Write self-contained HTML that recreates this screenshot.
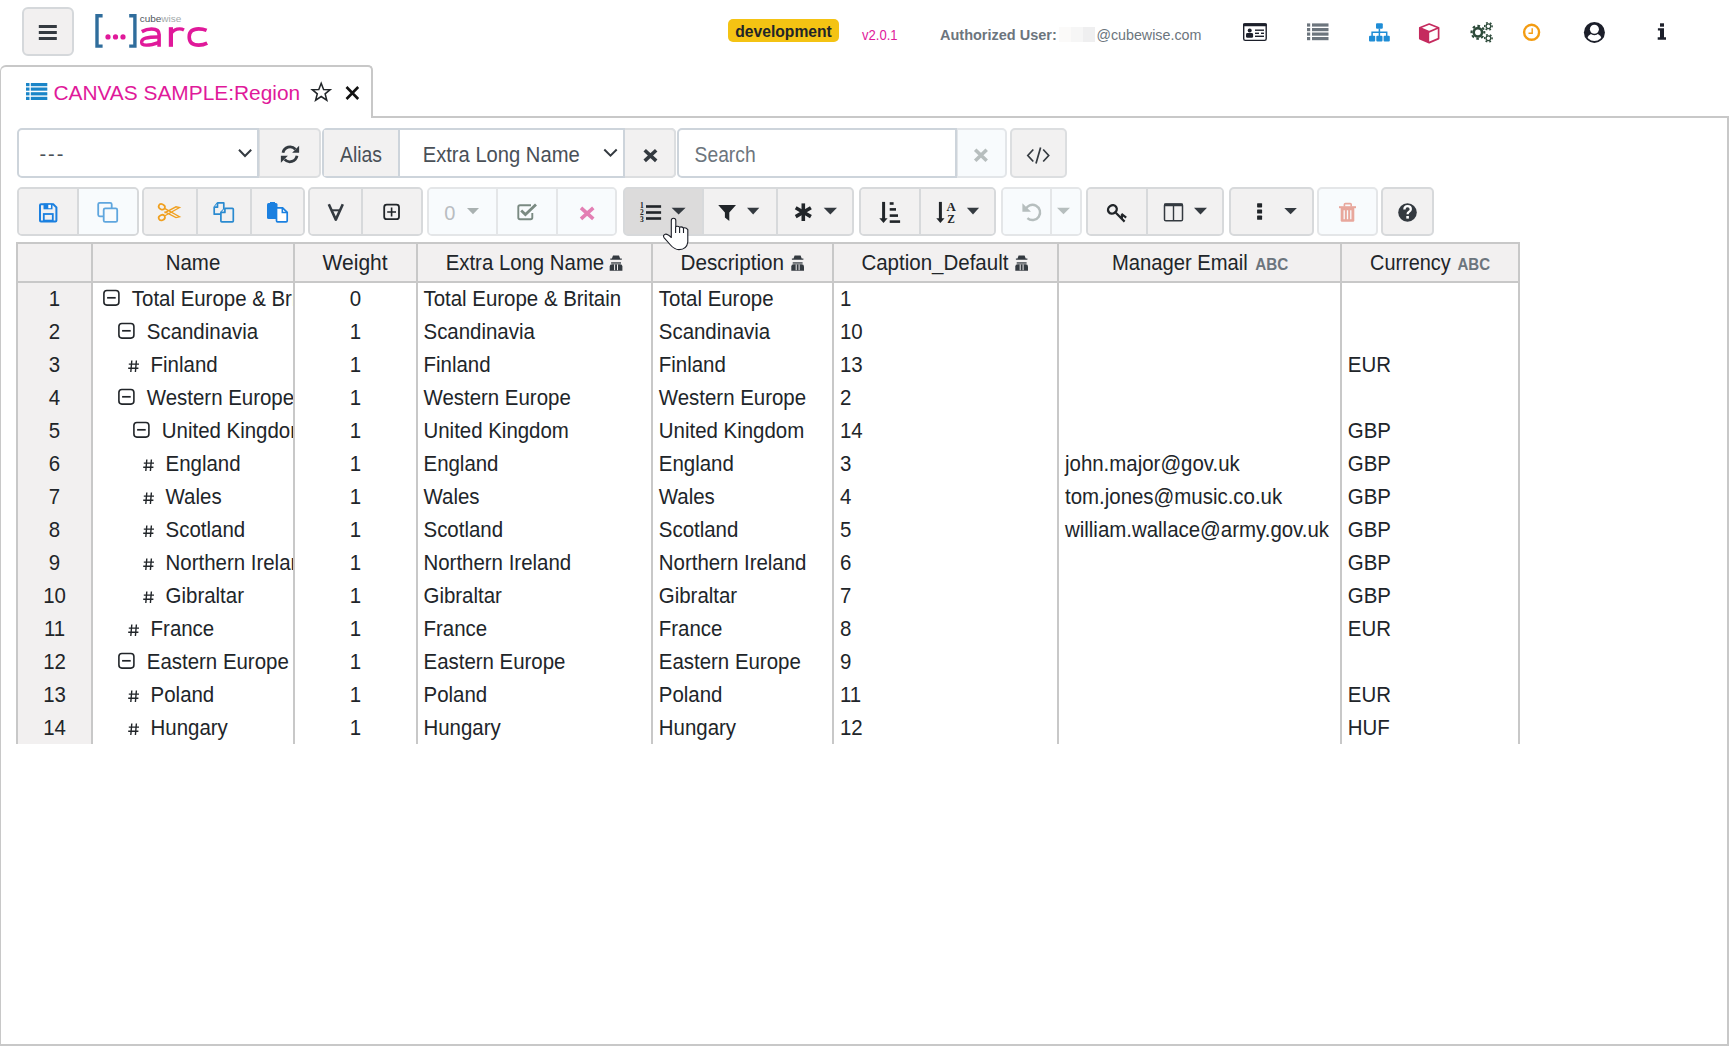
<!DOCTYPE html><html><head><meta charset="utf-8"><style>
*{box-sizing:border-box;margin:0;padding:0}
html,body{width:1734px;height:1056px;overflow:hidden;background:#fff;font-family:"Liberation Sans",sans-serif;color:#212529;position:relative}
.a{position:absolute}
.btn{position:absolute;background:#f2f0f0;border:2px solid #d9dcdf;}
.t{position:absolute;white-space:nowrap;line-height:1}
svg{position:absolute;overflow:visible}
.cell{position:absolute;white-space:nowrap;overflow:hidden;font-size:20.5px;line-height:33px;height:33px}
.vl{position:absolute;background:#c8c8c8;width:2px}
</style></head><body>
<div class="btn" style="left:22px;top:7px;width:52px;height:49px;border-radius:6px;border-color:#d5d8db"></div>
<svg style="left:0;top:0" width="1734" height="65"><rect x="38.8" y="25" width="18" height="3" fill="#343a40"/><rect x="38.8" y="31" width="18" height="3" fill="#343a40"/><rect x="38.8" y="37" width="18" height="3" fill="#343a40"/><path d="M102.6 15.7H97V46.1H102.6" fill="none" stroke="#2f6d9c" stroke-width="3.4"/><path d="M129.2 15.7H134.9V46.1H129.2" fill="none" stroke="#2f6d9c" stroke-width="3.4"/><circle cx="108" cy="36.9" r="2.6" fill="#e0199a"/><circle cx="115.5" cy="36.9" r="2.6" fill="#e0199a"/><circle cx="123" cy="36.9" r="2.6" fill="#e0199a"/><text x="139.7" y="22.3" font-family="Liberation Sans" font-size="9.8" font-weight="normal" textLength="41.6" lengthAdjust="spacingAndGlyphs"><tspan fill="#4f565c">cube</tspan><tspan fill="#a3a9aa">wise</tspan></text><g fill="none" stroke="#e0199a" stroke-width="3.6"><path d="M141.8 31.6Q146.5 29 151.6 29Q159.1 29.1 159.1 34.4V46.8"/><path d="M159.1 37Q150 36.9 145.6 38.2Q141.5 39.4 141.6 42.4Q141.8 45.2 146.2 45.2Q151.8 45.2 159.1 42.4" stroke-width="3.3"/><path d="M170.9 27.2V46.8" stroke-width="4.2"/><path d="M171.2 33.4Q174.2 28.9 179.6 28.9Q182 28.9 184 30" stroke-width="3.2"/><path d="M206.6 30.4Q203 28.9 198.6 28.9Q189.2 29 189.2 37Q189.2 45.1 198.8 45.1Q203.2 45.1 207.2 43.1"/></g></svg>
<div class="a" style="left:728px;top:19px;width:111px;height:23px;background:#f4c313;border-radius:5px"></div>
<svg style="left:0;top:0" width="1734" height="65"><text x="735.3" y="36.8" font-family="Liberation Sans" font-size="15.6" font-weight="bold" fill="#212529" textLength="96.5" lengthAdjust="spacingAndGlyphs">development</text><text x="862" y="39.8" font-family="Liberation Sans" font-size="15" fill="#e0199a" textLength="35.6" lengthAdjust="spacingAndGlyphs">v2.0.1</text><text x="940" y="40" font-family="Liberation Sans" font-size="15" font-weight="bold" fill="#6c757d" textLength="116.8" lengthAdjust="spacingAndGlyphs">Authorized User:</text><rect x="1059" y="27" width="12" height="15" fill="#fbfaf9"/><rect x="1071" y="27" width="12" height="15" fill="#f6f6f6"/><rect x="1083" y="27" width="12" height="15" fill="#efeff0"/><text x="1096.4" y="40" font-family="Liberation Sans" font-size="15" fill="#6c757d" textLength="105" lengthAdjust="spacingAndGlyphs">@cubewise.com</text></svg>
<svg style="left:0;top:0" width="1734" height="65"><rect x="1243.7" y="24" width="22.5" height="16.4" rx="1.6" fill="none" stroke="#1c1f2a" stroke-width="1.4"/><rect x="1243" y="23.3" width="23.9" height="2.9" rx="1.2" fill="#1c1f2a"/><circle cx="1249.7" cy="30.5" r="2" fill="#1c1f2a"/><rect x="1246" y="33.1" width="7.1" height="4.7" rx="1.4" fill="#1c1f2a"/><rect x="1255" y="29.5" width="9" height="1.4" fill="#1c1f2a"/><rect x="1255" y="32.6" width="4" height="1.4" fill="#1c1f2a"/><rect x="1261" y="32.6" width="3" height="1.4" fill="#1c1f2a"/><rect x="1255" y="35.6" width="9" height="1.4" fill="#1c1f2a"/><g fill="#6c757d"><rect x="1307" y="23.4" width="3.2" height="3.2"/><rect x="1312" y="23.4" width="16.5" height="3.2"/><rect x="1307" y="28" width="3.2" height="3.2"/><rect x="1312" y="28" width="16.5" height="3.2"/><rect x="1307" y="32.5" width="3.2" height="3.2"/><rect x="1312" y="32.5" width="16.5" height="3.2"/><rect x="1307" y="37" width="3.2" height="3.2"/><rect x="1312" y="37" width="16.5" height="3.2"/></g><g fill="#1f8dd6"><rect x="1376" y="23.3" width="6.8" height="5.4" rx="1"/><rect x="1369" y="35.8" width="6.2" height="5.7" rx="1"/><rect x="1376.3" y="35.8" width="6.2" height="5.7" rx="1"/><rect x="1383.6" y="35.8" width="6.2" height="5.7" rx="1"/></g><path d="M1379.4 28.5V36M1372.1 36V32.2H1386.7V36" fill="none" stroke="#1f8dd6" stroke-width="1.5"/><path d="M1429.2 24L1438.6 27.8V38.6L1429.2 42.6L1419.8 38.6V27.8Z" fill="#fff" stroke="#c52a5e" stroke-width="1.7" stroke-linejoin="round"/><path d="M1419.8 27.8L1429.2 31.8V42.6L1419.8 38.6Z" fill="#c52a5e"/><path d="M1419.8 27.8L1429.2 31.8L1438.6 27.8" fill="none" stroke="#c52a5e" stroke-width="1.7"/><g fill="none" stroke="#2d4a3a"><circle cx="1477.9" cy="32.3" r="4.2" stroke-width="2.6"/><circle cx="1477.9" cy="32.3" r="6.4" stroke-width="2.1" stroke-dasharray="2.55 2.48" transform="rotate(-11 1477.9 32.3)"/><circle cx="1488.4" cy="26.3" r="2.35" stroke-width="1.3"/><circle cx="1488.4" cy="26.3" r="3.7" stroke-width="1.5" stroke-dasharray="1.9 1.97" transform="rotate(-15 1488.4 26.3)"/><circle cx="1488.4" cy="38.3" r="2.35" stroke-width="1.3"/><circle cx="1488.4" cy="38.3" r="3.7" stroke-width="1.5" stroke-dasharray="1.9 1.97" transform="rotate(-15 1488.4 38.3)"/></g><circle cx="1531.6" cy="32.3" r="7.5" fill="none" stroke="#f39c12" stroke-width="2.4"/><path d="M1532.2 28.3V33.2H1528.5" fill="none" stroke="#f39c12" stroke-width="1.4"/><clipPath id="ucc"><circle cx="1594.4" cy="32.4" r="8.6"/></clipPath><circle cx="1594.4" cy="32.4" r="10.5" fill="#1c1f2a"/><ellipse cx="1594.4" cy="42" rx="8.2" ry="9" fill="#fff" clip-path="url(#ucc)"/><circle cx="1594.4" cy="29.3" r="5.9" fill="#1c1f2a"/><circle cx="1594.4" cy="29.3" r="4.5" fill="#fff"/><rect x="1660" y="23.3" width="4" height="3.4" fill="#1c1f2a"/><path d="M1657.9 28.2H1664V37.2H1666V39.8H1657.7V37.2H1660V30.6H1657.9Z" fill="#1c1f2a"/></svg>
<div class="a" style="left:0;top:116px;width:1729px;height:930px;border:2px solid #c8c8c8;border-left-width:1px"></div>
<div class="a" style="left:0;top:65px;width:373px;height:53px;border:2px solid #c8c8c8;border-left-width:1px;border-bottom:none;border-radius:6px 5px 0 0;background:#fff"></div>
<svg style="left:0;top:60px" width="400" height="60"><g fill="#1a85c8"><rect x="26" y="23" width="3.5" height="3.2"/><rect x="30.8" y="23" width="16.5" height="3.2"/><rect x="26" y="27.5" width="3.5" height="3.2"/><rect x="30.8" y="27.5" width="16.5" height="3.2"/><rect x="26" y="32.2" width="3.5" height="3.2"/><rect x="30.8" y="32.2" width="16.5" height="3.2"/><rect x="26" y="36.8" width="3.5" height="3.2"/><rect x="30.8" y="36.8" width="16.5" height="3.2"/></g><text x="53.4" y="39.8" font-family="Liberation Sans" font-size="20.6" fill="#e0199a" textLength="246.8" lengthAdjust="spacingAndGlyphs">CANVAS SAMPLE:Region</text><path d="M321.2 23.3L323.6 29.4L330.2 29.7L325.1 33.8L326.8 40.2L321.2 36.5L315.6 40.2L317.3 33.8L312.2 29.7L318.8 29.4Z" fill="none" stroke="#212529" stroke-width="1.5" stroke-linejoin="miter"/><path d="M346.5 27L358.2 39M358.2 27L346.5 39" stroke="#111" stroke-width="2.6"/></svg>
<div class="a" style="left:17px;top:128px;width:242px;height:50px;border:2px solid #cdd4db;border-radius:5px 0 0 5px;background:#fff"></div>
<div class="a" style="left:258px;top:128px;width:63px;height:50px;border:2px solid #dcdee0;border-radius:0 5px 5px 0;background:#f2f1f1"></div>
<div class="a" style="left:257px;top:128px;width:2px;height:50px;background:#cdd4db"></div>
<div class="a" style="left:322px;top:128px;width:354px;height:50px;border:2px solid #cdd4db;border-radius:5px;background:#fff"></div>
<div class="a" style="left:324px;top:130px;width:75px;height:46px;background:#f2f1f1"></div>
<div class="a" style="left:398px;top:130px;width:2px;height:46px;background:#cdd4db"></div>
<div class="a" style="left:623px;top:128px;width:53px;height:50px;border:2px solid #dcdee0;border-radius:0 5px 5px 0;background:#f2f1f1"></div>
<div class="a" style="left:623px;top:128px;width:2px;height:50px;background:#cdd4db"></div>
<div class="a" style="left:677px;top:128px;width:281px;height:50px;border:2px solid #cdd4db;border-radius:5px 0 0 5px;background:#fff"></div>
<div class="a" style="left:956px;top:128px;width:51px;height:50px;border:2px solid #e3e6e9;border-radius:0 5px 5px 0;background:#f8fbfd"></div>
<div class="a" style="left:955px;top:128px;width:2px;height:50px;background:#cdd4db"></div>
<div class="a" style="left:1010px;top:128px;width:57px;height:50px;border:2px solid #dcdee0;border-radius:5px;background:#f2f1f1"></div>
<svg style="left:0;top:120px" width="1100" height="70"><text x="39.5" y="41" font-family="Liberation Sans" font-size="20" fill="#495057" textLength="23.8" lengthAdjust="spacing">---</text><path d="M239 29.8L245 36L251.2 29.8" fill="none" stroke="#343a40" stroke-width="2"/><path d="M283 32.8A7.2 7.2 0 0 1 295.4 29.2" fill="none" stroke="#343a40" stroke-width="2.8"/><path d="M299.1 25.8V32.8H292.1Z" fill="#343a40"/><path d="M297 35.8A7.2 7.2 0 0 1 284.6 39.4" fill="none" stroke="#343a40" stroke-width="2.8"/><path d="M280.9 42.8V35.8H287.9Z" fill="#343a40"/><text x="340" y="41.7" font-family="Liberation Sans" font-size="21.3" fill="#495057" textLength="42" lengthAdjust="spacingAndGlyphs">Alias</text><text x="422.7" y="41.7" font-family="Liberation Sans" font-size="21.3" fill="#495057" textLength="157" lengthAdjust="spacingAndGlyphs">Extra Long Name</text><path d="M604.3 29.5L610.5 35.6L616.7 29.5" fill="none" stroke="#343a40" stroke-width="2"/><path d="M644.7 30.3L656.2 40.9M656.2 30.3L644.7 40.9" stroke="#343a40" stroke-width="3.6"/><text x="694.6" y="41.7" font-family="Liberation Sans" font-size="21.3" fill="#6c757d" textLength="61" lengthAdjust="spacingAndGlyphs">Search</text><path d="M975.2 29.7L986.7 40.7M986.7 29.7L975.2 40.7" stroke="#b7bebe" stroke-width="3.6"/><path d="M1033.3 29.5L1027.8 35.5L1033.3 41.5M1043.2 29.5L1048.7 35.5L1043.2 41.5M1040.6 27.6L1036 43.4" fill="none" stroke="#343a40" stroke-width="1.7"/></svg>
<div class="a" style="left:17px;top:187px;width:122px;height:49px;border:2px solid #d7d9db;border-radius:5px;background:#f2f1f1;overflow:hidden">
<div class="a" style="left:-2px;top:0;width:62px;height:45px;background:#f2f1f1"></div>
<div class="a" style="left:58px;top:0;width:64px;height:45px;background:#f8fbfd"></div>
<div class="a" style="left:58px;top:-2px;width:2px;height:49px;background:#d7d9db"></div>
</div>
<div class="a" style="left:142px;top:187px;width:163px;height:49px;border:2px solid #d7d9db;border-radius:5px;background:#f2f1f1;overflow:hidden">
<div class="a" style="left:-2px;top:0;width:56px;height:45px;background:#f2f1f1"></div>
<div class="a" style="left:52px;top:0;width:56px;height:45px;background:#f2f1f1"></div>
<div class="a" style="left:106px;top:0;width:57px;height:45px;background:#f2f1f1"></div>
<div class="a" style="left:52px;top:-2px;width:2px;height:49px;background:#d7d9db"></div>
<div class="a" style="left:106px;top:-2px;width:2px;height:49px;background:#d7d9db"></div>
</div>
<div class="a" style="left:308px;top:187px;width:115px;height:49px;border:2px solid #d7d9db;border-radius:5px;background:#f2f1f1;overflow:hidden">
<div class="a" style="left:-2px;top:0;width:55px;height:45px;background:#f2f1f1"></div>
<div class="a" style="left:51px;top:0;width:64px;height:45px;background:#f2f1f1"></div>
<div class="a" style="left:51px;top:-2px;width:2px;height:49px;background:#d7d9db"></div>
</div>
<div class="a" style="left:427px;top:187px;width:190px;height:49px;border:2px solid #e4e6e8;border-radius:5px;background:#f8fbfd;overflow:hidden">
<div class="a" style="left:-2px;top:0;width:71px;height:45px;background:#f8fbfd"></div>
<div class="a" style="left:67px;top:0;width:62px;height:45px;background:#f8fbfd"></div>
<div class="a" style="left:127px;top:0;width:63px;height:45px;background:#f8fbfd"></div>
<div class="a" style="left:67px;top:-2px;width:2px;height:49px;background:#e4e6e8"></div>
<div class="a" style="left:127px;top:-2px;width:2px;height:49px;background:#e4e6e8"></div>
</div>
<div class="a" style="left:623px;top:187px;width:231px;height:49px;border:2px solid #d7d9db;border-radius:5px;background:#dcdbdb;overflow:hidden">
<div class="a" style="left:-2px;top:0;width:81px;height:45px;background:#dcdbdb"></div>
<div class="a" style="left:77px;top:0;width:76px;height:45px;background:#f2f1f1"></div>
<div class="a" style="left:151px;top:0;width:80px;height:45px;background:#f2f1f1"></div>
<div class="a" style="left:77px;top:-2px;width:2px;height:49px;background:#d7d9db"></div>
<div class="a" style="left:151px;top:-2px;width:2px;height:49px;background:#d7d9db"></div>
</div>
<div class="a" style="left:859px;top:187px;width:137px;height:49px;border:2px solid #d7d9db;border-radius:5px;background:#f2f1f1;overflow:hidden">
<div class="a" style="left:-2px;top:0;width:62px;height:45px;background:#f2f1f1"></div>
<div class="a" style="left:58px;top:0;width:79px;height:45px;background:#f2f1f1"></div>
<div class="a" style="left:58px;top:-2px;width:2px;height:49px;background:#d7d9db"></div>
</div>
<div class="a" style="left:1001px;top:187px;width:81px;height:49px;border:2px solid #e4e6e8;border-radius:5px;background:#f8fbfd;overflow:hidden">
<div class="a" style="left:-2px;top:0;width:51px;height:45px;background:#f8fbfd"></div>
<div class="a" style="left:47px;top:0;width:34px;height:45px;background:#f8fbfd"></div>
<div class="a" style="left:47px;top:-2px;width:2px;height:49px;background:#e4e6e8"></div>
</div>
<div class="a" style="left:1086px;top:187px;width:138px;height:49px;border:2px solid #d7d9db;border-radius:5px;background:#f2f1f1;overflow:hidden">
<div class="a" style="left:-2px;top:0;width:62px;height:45px;background:#f2f1f1"></div>
<div class="a" style="left:58px;top:0;width:80px;height:45px;background:#f2f1f1"></div>
<div class="a" style="left:58px;top:-2px;width:2px;height:49px;background:#d7d9db"></div>
</div>
<div class="a" style="left:1229px;top:187px;width:85px;height:49px;border:2px solid #d7d9db;border-radius:5px;background:#f2f1f1;overflow:hidden">
</div>
<div class="a" style="left:1317px;top:187px;width:61px;height:49px;border:2px solid #e4e6e8;border-radius:5px;background:#f8fbfd;overflow:hidden">
</div>
<div class="a" style="left:1381px;top:187px;width:53px;height:49px;border:2px solid #d7d9db;border-radius:5px;background:#f2f1f1;overflow:hidden">
</div>
<svg style="left:0;top:0" width="1734" height="260"><path d="M40 205.2Q40 204.2 41 204.2H53.3L56.4 207.3V220.5Q56.4 221.5 55.4 221.5H41Q40 221.5 40 220.5Z" fill="none" stroke="#1b80e0" stroke-width="2"/><rect x="43.5" y="203.5" width="9" height="5.8" fill="#1b80e0"/><rect x="48.3" y="204.8" width="2.6" height="3.4" fill="#fff"/><rect x="43.8" y="214" width="9" height="6.6" fill="none" stroke="#1b80e0" stroke-width="1.8"/><rect x="98.2" y="202.8" width="13.5" height="13.5" rx="1.5" fill="none" stroke="#5fa6de" stroke-width="1.8"/><rect x="103.7" y="208.4" width="13.5" height="13.5" rx="1.5" fill="#f8fbfd" stroke="#5fa6de" stroke-width="1.8"/><g fill="none" stroke="#f0a020" stroke-width="1.7"><ellipse cx="161.8" cy="206.8" rx="3.2" ry="2.6" transform="rotate(25 161.8 206.8)"/><ellipse cx="161.8" cy="217.6" rx="3.2" ry="2.6" transform="rotate(-25 161.8 217.6)"/><path d="M164.5 208.4L179.5 216.8L176 217.6L164.5 211.6M164.5 216L179.5 207.6L176 206.8L164.5 212.8" stroke-width="1.3"/></g><g fill="#f2f1f1" stroke="#2a8ad0" stroke-width="1.7" stroke-linejoin="round"><path d="M217.5 202.9H223.8V212.2Q223.8 214.2 221.8 214.2H214.2V207.2Z"/><path d="M214.2 207.2H217.5V202.9"/><path d="M224.9 208.3H232.4Q233.3 208.3 233.3 209.3V221Q233.3 221.9 232.4 221.9H221.8Q220.9 221.9 220.9 221V212.4Z"/><path d="M220.9 212.4H224.9V208.3"/></g><rect x="267" y="203" width="10.5" height="16" rx="1.5" fill="#1b80e0"/><rect x="270" y="202" width="5" height="2" fill="#1b80e0"/><path d="M276.5 207.8H282.6L287.2 212.4V220.8Q287.2 221.8 286.2 221.8H277.5Q276.5 221.8 276.5 220.8Z" fill="#fff" stroke="#1b80e0" stroke-width="1.7"/><path d="M282.3 207.8V212.6H287.2" fill="none" stroke="#1b80e0" stroke-width="1.5"/><path d="M328.8 204.3L335.8 219.6L342.8 204.3" fill="none" stroke="#343a40" stroke-width="2.6" stroke-linejoin="round"/><path d="M331.4 210.3H340.2" stroke="#343a40" stroke-width="2"/><rect x="384.2" y="204.7" width="14.8" height="14.5" rx="2.5" fill="none" stroke="#212529" stroke-width="1.8"/><path d="M391.6 207.6V216.4M387.2 212H396" stroke="#212529" stroke-width="1.6"/><text x="444.3" y="220" font-family="Liberation Sans" font-size="20" fill="#b9bdc1">0</text><path d="M467 208H479L473.0 214.3Z" fill="#a9b1b1"/><path d="M531 205.2H520Q518.3 205.2 518.3 206.9V217.6Q518.3 219.3 520 219.3H530.6Q532.3 219.3 532.3 217.6V213" fill="none" stroke="#7a8a82" stroke-width="1.9"/><path d="M521.2 210.6L525.4 214.6L536 204.4" fill="none" stroke="#7a8a82" stroke-width="2.8"/><path d="M581 207.8L593.3 218.8M593.3 207.8L581 218.8" stroke="#e37fb4" stroke-width="3.6"/><g fill="#212529"><rect x="646" y="205.2" width="15.1" height="2.6"/><rect x="646" y="211.2" width="15.1" height="2.6"/><rect x="646" y="217.2" width="15.1" height="2.6"/></g><text x="640" y="208" font-family="Liberation Serif" font-size="7.5" font-weight="bold" fill="#212529">1</text><text x="640" y="215" font-family="Liberation Serif" font-size="7.5" font-weight="bold" fill="#212529">2</text><text x="640" y="222" font-family="Liberation Serif" font-size="7.5" font-weight="bold" fill="#212529">3</text><path d="M671.6 207.8H685.6L678.6 214.4Z" fill="#343a40"/><path d="M718.2 204.9H736L729.3 212.5V221L724.9 217.6V212.5Z" fill="#212529"/><path d="M747 207.8H759.3L753.15 214.4Z" fill="#343a40"/><g stroke="#212529" stroke-width="3.6"><path d="M803.3 203.4V221"/><path d="M795.7 207.8L810.9 216.6"/><path d="M810.9 207.8L795.7 216.6"/></g><path d="M823.7 207.8H837L830.35 214.4Z" fill="#343a40"/><path d="M883.6 201.9V219" stroke="#212529" stroke-width="3"/><path d="M879.3 218.3H887.6L883.5 223Z" fill="#212529"/><rect x="889.7" y="202.2" width="3.9" height="2.6" fill="#212529"/><rect x="889.7" y="208.1" width="6.3" height="2.6" fill="#212529"/><rect x="889.7" y="214.3" width="8.3" height="2.6" fill="#212529"/><rect x="889.7" y="220.3" width="10.4" height="2.6" fill="#212529"/><path d="M940.4 201.9V219" stroke="#212529" stroke-width="3"/><path d="M936.3 218.3H944.5L940.4 223Z" fill="#212529"/><text x="946.5" y="210.8" font-family="Liberation Serif" font-size="13" font-weight="bold" fill="#212529" textLength="9.3" lengthAdjust="spacingAndGlyphs">A</text><text x="947.2" y="223" font-family="Liberation Serif" font-size="13" font-weight="bold" fill="#212529" textLength="7.6" lengthAdjust="spacingAndGlyphs">Z</text><path d="M966.9 207.8H979.1L973.0 214.4Z" fill="#343a40"/><path d="M1025.3 210A7.6 7.6 0 1 1 1027.4 218.1" fill="none" stroke="#b6bebe" stroke-width="2.4"/><path d="M1022.4 203.2V211.8H1031Z" fill="#b6bebe"/><path d="M1057 207.7H1070L1063.5 214.3Z" fill="#b6bebe"/><ellipse cx="1112.4" cy="209.4" rx="4.5" ry="4" transform="rotate(-35 1112.4 209.4)" fill="none" stroke="#212529" stroke-width="2.4"/><path d="M1115.8 212.8L1124.6 221.6M1121.9 218.6V214.2M1121.4 213.9L1126.2 217.6" fill="none" stroke="#212529" stroke-width="2.2"/><rect x="1164.5" y="204" width="18" height="16.8" rx="1.4" fill="none" stroke="#343a40" stroke-width="1.5"/><rect x="1164" y="203.4" width="19" height="2.8" rx=".8" fill="#343a40"/><path d="M1173.5 205V221" stroke="#343a40" stroke-width="1.4"/><path d="M1194 207.7H1207L1200.5 214.6Z" fill="#343a40"/><rect x="1257.1" y="203.2" width="5" height="4.2" rx=".6" fill="#212529"/><rect x="1257.1" y="209.4" width="5" height="4.2" rx=".6" fill="#212529"/><rect x="1257.1" y="215.6" width="5" height="4.2" rx=".6" fill="#212529"/><path d="M1284.3 207.9H1296.9L1290.6 214.2Z" fill="#343a40"/><path d="M1339 206.2H1356V208.2H1339Z" fill="#e8a79c"/><path d="M1344.4 206.5V204.6Q1344.4 203.6 1345.4 203.6H1350.2Q1351.2 203.6 1351.2 204.6V206.5" fill="none" stroke="#e8a79c" stroke-width="1.6"/><path d="M1340.7 208H1354.3V220.6Q1354.3 221.8 1353.1 221.8H1341.9Q1340.7 221.8 1340.7 220.6Z" fill="#e8a79c"/><path d="M1344.2 210.2V219.2M1347.5 210.2V219.2M1350.8 210.2V219.2" stroke="#f8fbfd" stroke-width="1.3"/><circle cx="1407.5" cy="212.5" r="9.3" fill="#343a40"/><path d="M1404.4 209.6Q1404.4 206.2 1407.6 206.2Q1410.8 206.2 1410.8 209.2Q1410.8 211 1408.8 212Q1407.6 212.6 1407.6 214.2" fill="none" stroke="#fff" stroke-width="2.3"/><rect x="1406.3" y="216" width="2.6" height="2.6" fill="#fff"/></svg>
<div class="a" style="left:18px;top:244px;width:1500px;height:37px;background:#f2f0f0"></div>
<div class="a" style="left:18px;top:283px;width:73px;height:461px;background:#f2f0f0"></div>
<div class="a" style="left:16px;top:242px;width:1504px;height:2px;background:#c8c8c8"></div>
<div class="a" style="left:16px;top:281px;width:1504px;height:2px;background:#c8c8c8"></div>
<div class="vl" style="left:16px;top:242px;height:502px"></div>
<div class="vl" style="left:91px;top:242px;height:502px"></div>
<div class="vl" style="left:293px;top:242px;height:502px"></div>
<div class="vl" style="left:416px;top:242px;height:502px"></div>
<div class="vl" style="left:651px;top:242px;height:502px"></div>
<div class="vl" style="left:832px;top:242px;height:502px"></div>
<div class="vl" style="left:1057px;top:242px;height:502px"></div>
<div class="vl" style="left:1340px;top:242px;height:502px"></div>
<div class="vl" style="left:1518px;top:242px;height:502px"></div>
<svg style="left:0;top:0" width="1734" height="760"><text transform="translate(193 269.8) scale(0.96 1)" text-anchor="middle" font-family="Liberation Sans" font-size="21.3" fill="#212529">Name</text><text x="322.6" y="269.8" font-family="Liberation Sans" font-size="21.3" fill="#212529" textLength="65" lengthAdjust="spacingAndGlyphs">Weight</text><text x="445.7" y="269.8" font-family="Liberation Sans" font-size="21.3" fill="#212529" textLength="158.5" lengthAdjust="spacingAndGlyphs">Extra Long Name</text><g transform="translate(609.7 255.4)" fill="#343a40"><path d="M3.3 0H9.3L10.4 3H12.1V4.3H0.6V3H2.2Z"/><rect x="1.4" y="6.9" width="9.9" height="1.3"/><path d="M0 15.3V11Q0 8.8 2.4 8.8H10.3Q12.7 8.8 12.7 11V15.3Z"/><path d="M4.9 9V14.8M7.8 9V14.8" stroke="#f2f0f0" stroke-width="1"/></g><text x="680.6" y="269.8" font-family="Liberation Sans" font-size="21.3" fill="#212529" textLength="103.4" lengthAdjust="spacingAndGlyphs">Description</text><g transform="translate(791.3 255.4)" fill="#343a40"><path d="M3.3 0H9.3L10.4 3H12.1V4.3H0.6V3H2.2Z"/><rect x="1.4" y="6.9" width="9.9" height="1.3"/><path d="M0 15.3V11Q0 8.8 2.4 8.8H10.3Q12.7 8.8 12.7 11V15.3Z"/><path d="M4.9 9V14.8M7.8 9V14.8" stroke="#f2f0f0" stroke-width="1"/></g><text x="861.4" y="269.8" font-family="Liberation Sans" font-size="21.3" fill="#212529" textLength="147" lengthAdjust="spacingAndGlyphs">Caption_Default</text><g transform="translate(1015.3 255.4)" fill="#343a40"><path d="M3.3 0H9.3L10.4 3H12.1V4.3H0.6V3H2.2Z"/><rect x="1.4" y="6.9" width="9.9" height="1.3"/><path d="M0 15.3V11Q0 8.8 2.4 8.8H10.3Q12.7 8.8 12.7 11V15.3Z"/><path d="M4.9 9V14.8M7.8 9V14.8" stroke="#f2f0f0" stroke-width="1"/></g><text x="1112" y="269.8" font-family="Liberation Sans" font-size="21.3" fill="#212529" textLength="135.8" lengthAdjust="spacingAndGlyphs">Manager Email</text><text x="1255.3" y="269.7" font-family="Liberation Sans" font-size="16" font-weight="bold" fill="#6c757d" textLength="33" lengthAdjust="spacingAndGlyphs">ABC</text><text x="1370.1" y="269.8" font-family="Liberation Sans" font-size="21.3" fill="#212529" textLength="80.6" lengthAdjust="spacingAndGlyphs">Currency</text><text x="1457.5" y="269.7" font-family="Liberation Sans" font-size="16" font-weight="bold" fill="#6c757d" textLength="32.6" lengthAdjust="spacingAndGlyphs">ABC</text><clipPath id="namec"><rect x="95" y="283" width="198" height="470"/></clipPath><text transform="translate(54.5 306) scale(0.96 1)" text-anchor="middle" font-family="Liberation Sans" font-size="21.3" fill="#212529" >1</text><rect x="103.89999999999999" y="290.5" width="15" height="14.6" rx="3" fill="none" stroke="#212529" stroke-width="1.6"/><path d="M107.1 297.8H115.69999999999999" stroke="#212529" stroke-width="1.7"/><g clip-path="url(#namec)"><text transform="translate(131.8 306) scale(0.96 1)" font-family="Liberation Sans" font-size="21.3" fill="#212529" >Total Europe &amp; Britain</text></g><text transform="translate(355.5 306) scale(0.96 1)" text-anchor="middle" font-family="Liberation Sans" font-size="21.3" fill="#212529" >0</text><text transform="translate(423.5 306) scale(0.96 1)" font-family="Liberation Sans" font-size="21.3" fill="#212529" >Total Europe &amp; Britain</text><text transform="translate(658.8 306) scale(0.96 1)" font-family="Liberation Sans" font-size="21.3" fill="#212529" >Total Europe</text><text transform="translate(840 306) scale(0.96 1)" font-family="Liberation Sans" font-size="21.3" fill="#212529" >1</text><text transform="translate(54.5 339) scale(0.96 1)" text-anchor="middle" font-family="Liberation Sans" font-size="21.3" fill="#212529" >2</text><rect x="118.89999999999999" y="323.5" width="15" height="14.6" rx="3" fill="none" stroke="#212529" stroke-width="1.6"/><path d="M122.1 330.8H130.7" stroke="#212529" stroke-width="1.7"/><g clip-path="url(#namec)"><text transform="translate(146.8 339) scale(0.96 1)" font-family="Liberation Sans" font-size="21.3" fill="#212529" >Scandinavia</text></g><text transform="translate(355.5 339) scale(0.96 1)" text-anchor="middle" font-family="Liberation Sans" font-size="21.3" fill="#212529" >1</text><text transform="translate(423.5 339) scale(0.96 1)" font-family="Liberation Sans" font-size="21.3" fill="#212529" >Scandinavia</text><text transform="translate(658.8 339) scale(0.96 1)" font-family="Liberation Sans" font-size="21.3" fill="#212529" >Scandinavia</text><text transform="translate(840 339) scale(0.96 1)" font-family="Liberation Sans" font-size="21.3" fill="#212529" >10</text><text transform="translate(54.5 372) scale(0.96 1)" text-anchor="middle" font-family="Liberation Sans" font-size="21.3" fill="#212529" >3</text><path d="M131.79999999999998 360.5L130.79999999999998 372.0M136.39999999999998 360.5L135.39999999999998 372.0M128.79999999999998 364.1H139.0M128.2 368.3H138.39999999999998" stroke="#212529" stroke-width="1.4"/><g clip-path="url(#namec)"><text transform="translate(150.6 372) scale(0.96 1)" font-family="Liberation Sans" font-size="21.3" fill="#212529" >Finland</text></g><text transform="translate(355.5 372) scale(0.96 1)" text-anchor="middle" font-family="Liberation Sans" font-size="21.3" fill="#212529" >1</text><text transform="translate(423.5 372) scale(0.96 1)" font-family="Liberation Sans" font-size="21.3" fill="#212529" >Finland</text><text transform="translate(658.8 372) scale(0.96 1)" font-family="Liberation Sans" font-size="21.3" fill="#212529" >Finland</text><text transform="translate(840 372) scale(0.96 1)" font-family="Liberation Sans" font-size="21.3" fill="#212529" >13</text><text transform="translate(1347.8 372) scale(0.96 1)" font-family="Liberation Sans" font-size="21.3" fill="#212529" >EUR</text><text transform="translate(54.5 405) scale(0.96 1)" text-anchor="middle" font-family="Liberation Sans" font-size="21.3" fill="#212529" >4</text><rect x="118.89999999999999" y="389.5" width="15" height="14.6" rx="3" fill="none" stroke="#212529" stroke-width="1.6"/><path d="M122.1 396.8H130.7" stroke="#212529" stroke-width="1.7"/><g clip-path="url(#namec)"><text transform="translate(146.8 405) scale(0.96 1)" font-family="Liberation Sans" font-size="21.3" fill="#212529" >Western Europe</text></g><text transform="translate(355.5 405) scale(0.96 1)" text-anchor="middle" font-family="Liberation Sans" font-size="21.3" fill="#212529" >1</text><text transform="translate(423.5 405) scale(0.96 1)" font-family="Liberation Sans" font-size="21.3" fill="#212529" >Western Europe</text><text transform="translate(658.8 405) scale(0.96 1)" font-family="Liberation Sans" font-size="21.3" fill="#212529" >Western Europe</text><text transform="translate(840 405) scale(0.96 1)" font-family="Liberation Sans" font-size="21.3" fill="#212529" >2</text><text transform="translate(54.5 438) scale(0.96 1)" text-anchor="middle" font-family="Liberation Sans" font-size="21.3" fill="#212529" >5</text><rect x="133.9" y="422.5" width="15" height="14.6" rx="3" fill="none" stroke="#212529" stroke-width="1.6"/><path d="M137.1 429.8H145.7" stroke="#212529" stroke-width="1.7"/><g clip-path="url(#namec)"><text transform="translate(161.8 438) scale(0.96 1)" font-family="Liberation Sans" font-size="21.3" fill="#212529" >United Kingdom</text></g><text transform="translate(355.5 438) scale(0.96 1)" text-anchor="middle" font-family="Liberation Sans" font-size="21.3" fill="#212529" >1</text><text transform="translate(423.5 438) scale(0.96 1)" font-family="Liberation Sans" font-size="21.3" fill="#212529" >United Kingdom</text><text transform="translate(658.8 438) scale(0.96 1)" font-family="Liberation Sans" font-size="21.3" fill="#212529" >United Kingdom</text><text transform="translate(840 438) scale(0.96 1)" font-family="Liberation Sans" font-size="21.3" fill="#212529" >14</text><text transform="translate(1347.8 438) scale(0.96 1)" font-family="Liberation Sans" font-size="21.3" fill="#212529" >GBP</text><text transform="translate(54.5 471) scale(0.96 1)" text-anchor="middle" font-family="Liberation Sans" font-size="21.3" fill="#212529" >6</text><path d="M146.79999999999998 459.5L145.79999999999998 471.0M151.39999999999998 459.5L150.39999999999998 471.0M143.79999999999998 463.1H154.0M143.2 467.3H153.39999999999998" stroke="#212529" stroke-width="1.4"/><g clip-path="url(#namec)"><text transform="translate(165.6 471) scale(0.96 1)" font-family="Liberation Sans" font-size="21.3" fill="#212529" >England</text></g><text transform="translate(355.5 471) scale(0.96 1)" text-anchor="middle" font-family="Liberation Sans" font-size="21.3" fill="#212529" >1</text><text transform="translate(423.5 471) scale(0.96 1)" font-family="Liberation Sans" font-size="21.3" fill="#212529" >England</text><text transform="translate(658.8 471) scale(0.96 1)" font-family="Liberation Sans" font-size="21.3" fill="#212529" >England</text><text transform="translate(840 471) scale(0.96 1)" font-family="Liberation Sans" font-size="21.3" fill="#212529" >3</text><text transform="translate(1065 471) scale(0.96 1)" font-family="Liberation Sans" font-size="21.3" fill="#212529" >john.major@gov.uk</text><text transform="translate(1347.8 471) scale(0.96 1)" font-family="Liberation Sans" font-size="21.3" fill="#212529" >GBP</text><text transform="translate(54.5 504) scale(0.96 1)" text-anchor="middle" font-family="Liberation Sans" font-size="21.3" fill="#212529" >7</text><path d="M146.79999999999998 492.5L145.79999999999998 504.0M151.39999999999998 492.5L150.39999999999998 504.0M143.79999999999998 496.1H154.0M143.2 500.3H153.39999999999998" stroke="#212529" stroke-width="1.4"/><g clip-path="url(#namec)"><text transform="translate(165.6 504) scale(0.96 1)" font-family="Liberation Sans" font-size="21.3" fill="#212529" >Wales</text></g><text transform="translate(355.5 504) scale(0.96 1)" text-anchor="middle" font-family="Liberation Sans" font-size="21.3" fill="#212529" >1</text><text transform="translate(423.5 504) scale(0.96 1)" font-family="Liberation Sans" font-size="21.3" fill="#212529" >Wales</text><text transform="translate(658.8 504) scale(0.96 1)" font-family="Liberation Sans" font-size="21.3" fill="#212529" >Wales</text><text transform="translate(840 504) scale(0.96 1)" font-family="Liberation Sans" font-size="21.3" fill="#212529" >4</text><text transform="translate(1065 504) scale(0.96 1)" font-family="Liberation Sans" font-size="21.3" fill="#212529" >tom.jones@music.co.uk</text><text transform="translate(1347.8 504) scale(0.96 1)" font-family="Liberation Sans" font-size="21.3" fill="#212529" >GBP</text><text transform="translate(54.5 537) scale(0.96 1)" text-anchor="middle" font-family="Liberation Sans" font-size="21.3" fill="#212529" >8</text><path d="M146.79999999999998 525.5L145.79999999999998 537.0M151.39999999999998 525.5L150.39999999999998 537.0M143.79999999999998 529.1H154.0M143.2 533.3H153.39999999999998" stroke="#212529" stroke-width="1.4"/><g clip-path="url(#namec)"><text transform="translate(165.6 537) scale(0.96 1)" font-family="Liberation Sans" font-size="21.3" fill="#212529" >Scotland</text></g><text transform="translate(355.5 537) scale(0.96 1)" text-anchor="middle" font-family="Liberation Sans" font-size="21.3" fill="#212529" >1</text><text transform="translate(423.5 537) scale(0.96 1)" font-family="Liberation Sans" font-size="21.3" fill="#212529" >Scotland</text><text transform="translate(658.8 537) scale(0.96 1)" font-family="Liberation Sans" font-size="21.3" fill="#212529" >Scotland</text><text transform="translate(840 537) scale(0.96 1)" font-family="Liberation Sans" font-size="21.3" fill="#212529" >5</text><text transform="translate(1065 537) scale(0.96 1)" font-family="Liberation Sans" font-size="21.3" fill="#212529" >william.wallace@army.gov.uk</text><text transform="translate(1347.8 537) scale(0.96 1)" font-family="Liberation Sans" font-size="21.3" fill="#212529" >GBP</text><text transform="translate(54.5 570) scale(0.96 1)" text-anchor="middle" font-family="Liberation Sans" font-size="21.3" fill="#212529" >9</text><path d="M146.79999999999998 558.5L145.79999999999998 570.0M151.39999999999998 558.5L150.39999999999998 570.0M143.79999999999998 562.1H154.0M143.2 566.3H153.39999999999998" stroke="#212529" stroke-width="1.4"/><g clip-path="url(#namec)"><text transform="translate(165.6 570) scale(0.96 1)" font-family="Liberation Sans" font-size="21.3" fill="#212529" >Northern Ireland</text></g><text transform="translate(355.5 570) scale(0.96 1)" text-anchor="middle" font-family="Liberation Sans" font-size="21.3" fill="#212529" >1</text><text transform="translate(423.5 570) scale(0.96 1)" font-family="Liberation Sans" font-size="21.3" fill="#212529" >Northern Ireland</text><text transform="translate(658.8 570) scale(0.96 1)" font-family="Liberation Sans" font-size="21.3" fill="#212529" >Northern Ireland</text><text transform="translate(840 570) scale(0.96 1)" font-family="Liberation Sans" font-size="21.3" fill="#212529" >6</text><text transform="translate(1347.8 570) scale(0.96 1)" font-family="Liberation Sans" font-size="21.3" fill="#212529" >GBP</text><text transform="translate(54.5 603) scale(0.96 1)" text-anchor="middle" font-family="Liberation Sans" font-size="21.3" fill="#212529" >10</text><path d="M146.79999999999998 591.5L145.79999999999998 603.0M151.39999999999998 591.5L150.39999999999998 603.0M143.79999999999998 595.1H154.0M143.2 599.3H153.39999999999998" stroke="#212529" stroke-width="1.4"/><g clip-path="url(#namec)"><text transform="translate(165.6 603) scale(0.96 1)" font-family="Liberation Sans" font-size="21.3" fill="#212529" >Gibraltar</text></g><text transform="translate(355.5 603) scale(0.96 1)" text-anchor="middle" font-family="Liberation Sans" font-size="21.3" fill="#212529" >1</text><text transform="translate(423.5 603) scale(0.96 1)" font-family="Liberation Sans" font-size="21.3" fill="#212529" >Gibraltar</text><text transform="translate(658.8 603) scale(0.96 1)" font-family="Liberation Sans" font-size="21.3" fill="#212529" >Gibraltar</text><text transform="translate(840 603) scale(0.96 1)" font-family="Liberation Sans" font-size="21.3" fill="#212529" >7</text><text transform="translate(1347.8 603) scale(0.96 1)" font-family="Liberation Sans" font-size="21.3" fill="#212529" >GBP</text><text transform="translate(54.5 636) scale(0.96 1)" text-anchor="middle" font-family="Liberation Sans" font-size="21.3" fill="#212529" >11</text><path d="M131.79999999999998 624.5L130.79999999999998 636.0M136.39999999999998 624.5L135.39999999999998 636.0M128.79999999999998 628.1H139.0M128.2 632.3H138.39999999999998" stroke="#212529" stroke-width="1.4"/><g clip-path="url(#namec)"><text transform="translate(150.6 636) scale(0.96 1)" font-family="Liberation Sans" font-size="21.3" fill="#212529" >France</text></g><text transform="translate(355.5 636) scale(0.96 1)" text-anchor="middle" font-family="Liberation Sans" font-size="21.3" fill="#212529" >1</text><text transform="translate(423.5 636) scale(0.96 1)" font-family="Liberation Sans" font-size="21.3" fill="#212529" >France</text><text transform="translate(658.8 636) scale(0.96 1)" font-family="Liberation Sans" font-size="21.3" fill="#212529" >France</text><text transform="translate(840 636) scale(0.96 1)" font-family="Liberation Sans" font-size="21.3" fill="#212529" >8</text><text transform="translate(1347.8 636) scale(0.96 1)" font-family="Liberation Sans" font-size="21.3" fill="#212529" >EUR</text><text transform="translate(54.5 669) scale(0.96 1)" text-anchor="middle" font-family="Liberation Sans" font-size="21.3" fill="#212529" >12</text><rect x="118.89999999999999" y="653.5" width="15" height="14.6" rx="3" fill="none" stroke="#212529" stroke-width="1.6"/><path d="M122.1 660.8000000000001H130.7" stroke="#212529" stroke-width="1.7"/><g clip-path="url(#namec)"><text transform="translate(146.8 669) scale(0.96 1)" font-family="Liberation Sans" font-size="21.3" fill="#212529" >Eastern Europe</text></g><text transform="translate(355.5 669) scale(0.96 1)" text-anchor="middle" font-family="Liberation Sans" font-size="21.3" fill="#212529" >1</text><text transform="translate(423.5 669) scale(0.96 1)" font-family="Liberation Sans" font-size="21.3" fill="#212529" >Eastern Europe</text><text transform="translate(658.8 669) scale(0.96 1)" font-family="Liberation Sans" font-size="21.3" fill="#212529" >Eastern Europe</text><text transform="translate(840 669) scale(0.96 1)" font-family="Liberation Sans" font-size="21.3" fill="#212529" >9</text><text transform="translate(54.5 702) scale(0.96 1)" text-anchor="middle" font-family="Liberation Sans" font-size="21.3" fill="#212529" >13</text><path d="M131.79999999999998 690.5L130.79999999999998 702.0M136.39999999999998 690.5L135.39999999999998 702.0M128.79999999999998 694.1H139.0M128.2 698.3H138.39999999999998" stroke="#212529" stroke-width="1.4"/><g clip-path="url(#namec)"><text transform="translate(150.6 702) scale(0.96 1)" font-family="Liberation Sans" font-size="21.3" fill="#212529" >Poland</text></g><text transform="translate(355.5 702) scale(0.96 1)" text-anchor="middle" font-family="Liberation Sans" font-size="21.3" fill="#212529" >1</text><text transform="translate(423.5 702) scale(0.96 1)" font-family="Liberation Sans" font-size="21.3" fill="#212529" >Poland</text><text transform="translate(658.8 702) scale(0.96 1)" font-family="Liberation Sans" font-size="21.3" fill="#212529" >Poland</text><text transform="translate(840 702) scale(0.96 1)" font-family="Liberation Sans" font-size="21.3" fill="#212529" >11</text><text transform="translate(1347.8 702) scale(0.96 1)" font-family="Liberation Sans" font-size="21.3" fill="#212529" >EUR</text><text transform="translate(54.5 735) scale(0.96 1)" text-anchor="middle" font-family="Liberation Sans" font-size="21.3" fill="#212529" >14</text><path d="M131.79999999999998 723.5L130.79999999999998 735.0M136.39999999999998 723.5L135.39999999999998 735.0M128.79999999999998 727.1H139.0M128.2 731.3H138.39999999999998" stroke="#212529" stroke-width="1.4"/><g clip-path="url(#namec)"><text transform="translate(150.6 735) scale(0.96 1)" font-family="Liberation Sans" font-size="21.3" fill="#212529" >Hungary</text></g><text transform="translate(355.5 735) scale(0.96 1)" text-anchor="middle" font-family="Liberation Sans" font-size="21.3" fill="#212529" >1</text><text transform="translate(423.5 735) scale(0.96 1)" font-family="Liberation Sans" font-size="21.3" fill="#212529" >Hungary</text><text transform="translate(658.8 735) scale(0.96 1)" font-family="Liberation Sans" font-size="21.3" fill="#212529" >Hungary</text><text transform="translate(840 735) scale(0.96 1)" font-family="Liberation Sans" font-size="21.3" fill="#212529" >12</text><text transform="translate(1347.8 735) scale(0.96 1)" font-family="Liberation Sans" font-size="21.3" fill="#212529" >HUF</text></svg>
<svg style="left:0;top:0" width="1734" height="260"><path d="M671.3 237.5V220.5Q671.3 218.2 673.5 218.2Q675.8 218.2 675.8 220.5V226.6Q677.8 225.6 679.6 227.2Q681.6 226.3 683.5 228Q685.9 227.2 687.8 229.6V242Q686.8 249.6 679 249.6Q674.5 249.6 670.5 245L664 237.6Q662.6 235 665.2 234.2Q667.4 233.6 671.3 237.5Z" fill="#fff" stroke="#1a1d26" stroke-width="1.1" stroke-linejoin="round"/><path d="M675.6 226.6V233M679.6 227.2V233M683.5 228V233" fill="none" stroke="#1a1d26" stroke-width="1.1"/></svg>
</body></html>
